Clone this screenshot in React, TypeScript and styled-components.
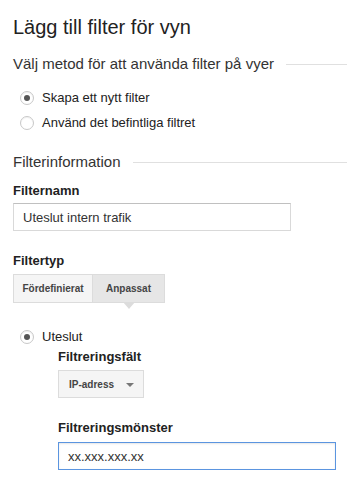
import React from 'react';
import styled, { createGlobalStyle } from 'styled-components';

const GlobalStyle = createGlobalStyle`
	html, body {
		margin: 0;
		padding: 0;
		background: #fff;
	}
	body {
		font-family: "Liberation Sans", Arial, sans-serif;
		color: #222;
	}
`;

const Page = styled.div`
	width: 347px;
	padding: 15px 0 0 13px;
	box-sizing: border-box;
`;

const Title = styled.h1`
	margin: 0;
	font-size: 20px;
	font-weight: normal;
	line-height: 24px;
	color: #222;
`;

const Section = styled.div<{ top: number }>`
	display: flex;
	align-items: center;
	gap: 12px;
	font-size: 15px;
	line-height: 20px;
	color: #333;
	margin-top: ${(p) => p.top}px;

	&::after {
		content: '';
		flex: 1;
		height: 1px;
		background: #e0e0e0;
	}
`;

const RadioList = styled.div<{ top: number }>`
	display: flex;
	flex-direction: column;
	gap: 9px;
	margin-top: ${(p) => p.top}px;
	padding-left: 7px;
`;

const RadioRow = styled.label`
	display: flex;
	align-items: center;
	gap: 8px;
	font-size: 13px;
	line-height: 16px;
	color: #222;
`;

const RadioDot = styled.span<{ checked?: boolean }>`
	width: 14px;
	height: 14px;
	border-radius: 50%;
	border: 1px solid #c8c8c8;
	background: #fff;
	box-sizing: border-box;
	display: flex;
	align-items: center;
	justify-content: center;
	box-shadow: inset 0 1px 1px rgba(0, 0, 0, 0.06);

	&::after {
		content: '';
		width: 6px;
		height: 6px;
		border-radius: 50%;
		background: ${(p) => (p.checked ? '#555' : 'transparent')};
	}
`;

const Label = styled.div<{ top: number }>`
	font-size: 13px;
	font-weight: bold;
	line-height: 16px;
	color: #222;
	margin-top: ${(p) => p.top}px;
`;

const TextBox = styled.div<{ top: number; focus?: boolean }>`
	width: 278px;
	height: 28px;
	box-sizing: border-box;
	margin-top: ${(p) => p.top}px;
	border: 1px solid ${(p) => (p.focus ? '#5b95e0' : '#d9d9d9')};
	border-top-color: ${(p) => (p.focus ? '#5b95e0' : '#c0c0c0')};
	box-shadow: ${(p) => (p.focus ? 'inset 0 1px 2px rgba(0,0,0,0.1)' : 'none')};
	padding: 0 9px;
	display: flex;
	align-items: center;
	font-size: 13px;
	color: #333;
`;

const Tabs = styled.div`
	display: flex;
	margin-top: 5px;
`;

const Tab = styled.div<{ active?: boolean; w: number }>`
	position: relative;
	width: ${(p) => p.w}px;
	height: 29px;
	box-sizing: border-box;
	display: flex;
	align-items: center;
	justify-content: center;
	font-size: 10px;
	font-weight: bold;
	color: #444;
	background: ${(p) => (p.active ? '#e6e6e6' : '#f5f5f5')};
	border: 1px solid #dcdcdc;
	margin-left: ${(p) => (p.active ? -1 : 0)}px;

	${(p) =>
		p.active &&
		`
		&::after {
			content: '';
			position: absolute;
			left: 50%;
			bottom: -7px;
			margin-left: -6px;
			border-left: 6px solid transparent;
			border-right: 6px solid transparent;
			border-top: 7px solid #dcdcdc;
		}
	`}
`;

const Indented = styled.div`
	padding-left: 45px;
`;

const Select = styled.div`
	margin-top: 5px;
	width: 86px;
	height: 28px;
	box-sizing: border-box;
	border: 1px solid #dcdcdc;
	background: #f5f5f5;
	display: flex;
	align-items: center;
	justify-content: space-between;
	padding: 0 9px 0 10px;
	font-size: 10px;
	font-weight: bold;
	color: #444;

	&::after {
		content: '';
		border-left: 4px solid transparent;
		border-right: 4px solid transparent;
		border-top: 4px solid #777;
		margin-top: 2px;
	}
`;

export default function App() {
	return (
		<>
			<GlobalStyle />
			<Page>
				<Title>Lägg till filter för vyn</Title>
				<Section top={15}>Välj metod för att använda filter på vyer</Section>
				<RadioList top={16}>
					<RadioRow>
						<RadioDot checked />
						Skapa ett nytt filter
					</RadioRow>
					<RadioRow>
						<RadioDot />
						Använd det befintliga filtret
					</RadioRow>
				</RadioList>
				<Section top={21}>Filterinformation</Section>
				<Label top={11}>Filternamn</Label>
				<TextBox top={4}>Uteslut intern trafik</TextBox>
				<Label top={22}>Filtertyp</Label>
				<Tabs>
					<Tab w={80}>Fördefinierat</Tab>
					<Tab w={73} active>
						Anpassat
					</Tab>
				</Tabs>
				<RadioList top={26}>
					<RadioRow>
						<RadioDot checked />
						Uteslut
					</RadioRow>
				</RadioList>
				<Indented>
					<Label top={4}>Filtreringsfält</Label>
					<Select>IP-adress</Select>
					<Label top={22}>Filtreringsmönster</Label>
					<TextBox top={6} focus>
						xx.xxx.xxx.xx
					</TextBox>
				</Indented>
			</Page>
		</>
	);
}
